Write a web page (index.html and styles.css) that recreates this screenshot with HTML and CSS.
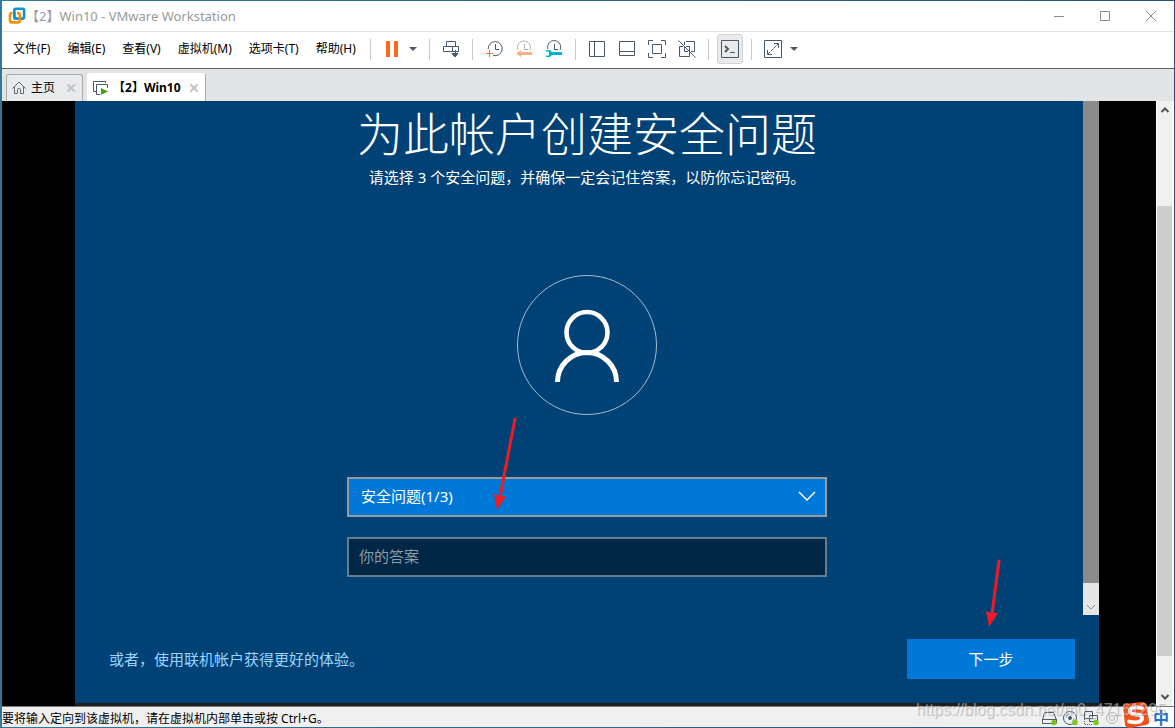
FILE: index.html
```html
<!DOCTYPE html>
<html lang="zh-CN">
<head>
<meta charset="utf-8">
<title>【2】Win10 - VMware Workstation</title>
<link rel="stylesheet" href="styles.css">
</head>
<body>
<div class="window">
  <header class="titlebar">
    <svg class="app-logo" width="18" height="18" viewBox="0 0 18 18" fill="none" stroke-width="2.6">
      <rect x="6.3" y="1.8" width="9.8" height="9.8" rx="1.5" stroke="#0d93cf"/>
      <path d="M4.5 6H3.6Q2 6 2 7.600V13.800Q2 15.400 3.600 15.400H10.200Q11.800 15.400 11.800 13.800V7.600Q11.800 6 10.200 6H9" stroke="#f0900a"/>
      <path d="M6.300 5V10.100Q6.300 11.600 7.800 11.600H9" stroke="#0d93cf"/>
    </svg>
    <h1 class="window-title">【2】Win10 - VMware Workstation</h1>
    <div class="window-controls">
      <button class="window-button" aria-label="最小化"><svg width="12" height="12" viewBox="0 0 12 12"><path d="M1 6.500H11"/></svg></button>
      <button class="window-button" aria-label="最大化"><svg width="12" height="12" viewBox="0 0 12 12"><path d="M1.500 1.500H10.500V10.500H1.500Z"/></svg></button>
      <button class="window-button" aria-label="关闭"><svg width="12" height="12" viewBox="0 0 12 12"><path d="M1 1L11 11M11 1L1 11"/></svg></button>
    </div>
  </header>

  <div class="menubar">
    <nav class="menu">
      <button class="menu-item">文件(F)</button>
      <button class="menu-item">编辑(E)</button>
      <button class="menu-item">查看(V)</button>
      <button class="menu-item">虚拟机(M)</button>
      <button class="menu-item">选项卡(T)</button>
      <button class="menu-item">帮助(H)</button>
    </nav>
    <div class="toolbar">
      <span class="separator"></span>
      <button class="tool" aria-label="挂起"><svg width="20" height="20" viewBox="0 0 20 20"><path d="M4 2H8V18H4ZM12 2H16V18H12Z" fill="#ff6a1f" stroke="none"/></svg></button>
      <button class="caret" aria-label="电源选项"><svg width="8" height="4" viewBox="0 0 8 4"><path d="M0 0H8L4 4Z"/></svg></button>
      <span class="separator separator-after-caret"></span>
      <button class="tool" aria-label="发送 Ctrl+Alt+Del"><svg width="20" height="20" viewBox="0 0 20 20"><path d="M5.500 2.500H14.500V7.500H5.500ZM2.500 7.500H17.500V12.500H2.500ZM11.500 7.500V12.500"/><path d="M11 14.500H17L14 18Z" fill="#47596a"/><path d="M14.500 11V16"/></svg></button>
      <span class="separator"></span>
      <button class="tool" aria-label="拍摄快照"><svg width="20" height="20" viewBox="0 0 20 20"><path d="M4.200 10A7 7 0 1 1 9 16.300M11.500 5V10.500H15"/><path d="M5.500 11V18M2 14.500H9" stroke="#ff6a1f"/></svg></button>
      <button class="tool" aria-label="恢复快照"><svg width="20" height="20" viewBox="0 0 20 20"><path d="M4 11A6.500 6.500 0 1 1 16 11M10.500 5V10.500H14" stroke="#aeb4ba"/><path d="M2 14.500L7 11V13H18V16H7V18Z" fill="#ffae87" stroke="none"/></svg></button>
      <button class="tool" aria-label="管理快照"><svg width="20" height="20" viewBox="0 0 20 20"><path d="M4 10A6.500 6.500 0 1 1 16 11M10.500 5V10.500H14"/><path d="M2 11H6L8 13H18V16H8L6 18H2V16.500H5V12.500H2Z" fill="#00b3d6" stroke="none"/></svg></button>
      <span class="separator"></span>
      <button class="tool" aria-label="显示库"><svg width="20" height="20" viewBox="0 0 20 20"><path d="M2.500 2.500H17.500V17.500H2.500ZM7.500 2.500V17.500"/></svg></button>
      <button class="tool" aria-label="显示缩略图栏"><svg width="20" height="20" viewBox="0 0 20 20"><path d="M2.500 2.500H17.500V16.500H2.500ZM2.500 12.500H17.500"/></svg></button>
      <button class="tool" aria-label="全屏"><svg width="20" height="20" viewBox="0 0 20 20"><path d="M1.500 6V1.500H6M14 1.500H18.500V6M18.500 14V18.500H14M6 18.500H1.500V14M5.500 5.500H14.500V14.500H5.500Z"/></svg></button>
      <button class="tool" aria-label="Unity 模式"><svg width="20" height="20" viewBox="0 0 20 20"><path d="M9 2.500H17.500V12.500H14M7.500 6V2.500M12.500 11V17.500H2.500V7.500H6M9 7.500H12.500V11M7.500 8V12.500H11M1.500 1.500L18.500 18.500"/></svg></button>
      <span class="separator"></span>
      <button class="tool tool-active" aria-label="控制台视图"><svg width="20" height="20" viewBox="0 0 20 20"><path d="M1.500 1.500H18.500V18.500H1.500ZM10 13.500H15"/><path d="M5 7L8 10L5 13" stroke-width="2"/></svg></button>
      <span class="separator"></span>
      <button class="tool" aria-label="自由拉伸"><svg width="20" height="20" viewBox="0 0 20 20"><path d="M1.500 1.500H18.500V18.500H1.500ZM11 4.500H15.500V9M4.500 11V15.500H9"/><path d="M5 15L15 5" stroke-dasharray="3 1"/></svg></button>
      <button class="caret" aria-label="拉伸选项"><svg width="8" height="4" viewBox="0 0 8 4"><path d="M0 0H8L4 4Z"/></svg></button>
    </div>
  </div>

  <div class="tabs">
    <div class="tab">
      <svg width="14" height="14" viewBox="0 0 14 14" fill="none" stroke="#5d6b78"><path d="M.5 7.500L7 1L13.500 7.500M2.500 6V12.500H5.500V8.500Q5.500 7.500 7 7.500T8.500 8.500V12.500H11.500V6"/></svg>
      <a class="tab-label" href="#home">主页</a>
      <button class="tab-close" aria-label="关闭主页"><svg width="8" height="8" viewBox="0 0 8 8"><path d="M0 0L8 8M8 0L0 8"/></svg></button>
    </div>
    <div class="tab tab-current">
      <svg width="16" height="16" viewBox="0 0 16 16" fill="none" stroke="#47596a"><path d="M3 11.500H.5V1.500H12.500V3M7 14.500H3.500V4.500H14.500V8"/><path d="M8 8L15 11.500L8 15Z" fill="#45a012" stroke="none"/></svg>
      <a class="tab-label" href="#vm">【2】Win10</a>
      <button class="tab-close" aria-label="关闭 Win10"><svg width="8" height="8" viewBox="0 0 8 8"><path d="M0 0L8 8M8 0L0 8"/></svg></button>
    </div>
  </div>

  <div class="console">
    <main class="guest">
      <section class="page">
        <h2 class="heading">为此帐户创建安全问题</h2>
        <p class="subheading">请选择 3 个安全问题，并确保一定会记住答案，以防你忘记密码。</p>
        <svg class="avatar" width="140" height="140" viewBox="0 0 140 140" fill="none" stroke="#fff">
          <circle cx="70" cy="70" r="69.500" stroke="#a3bccf"/>
          <circle cx="70" cy="57.500" r="20.500" stroke-width="4.600"/>
          <path d="M40.500 107A29.500 29.500 0 0 1 99.500 107" stroke-width="5"/>
        </svg>
        <form class="form">
          <div class="select-wrap">
            <select class="question" aria-label="安全问题"><option>安全问题(1/3)</option></select>
            <svg class="chevron" width="18" height="10" viewBox="0 0 18 10"><path d="M1 1L9 9L17 1"/></svg>
          </div>
          <input class="answer" type="text" placeholder="你的答案" aria-label="你的答案">
          <svg class="arrow arrow-form" width="24" height="94" viewBox="0 0 24 94"><path class="shaft" d="M21 2L6 80"/><path class="head" d="M3 93L0 77L6 79L12 79Z"/></svg>
        </form>
      </section>
      <div class="guest-scroll">
        <svg width="10" height="6" viewBox="0 0 10 6"><path d="M1 1L5 5L9 1"/></svg>
      </div>
      <footer class="guest-footer">
        <a class="online-link" href="#online">或者，使用联机帐户获得更好的体验。</a>
        <div class="next-wrap">
          <button class="next">下一步</button>
          <svg class="arrow arrow-next" width="16" height="70" viewBox="0 0 16 70"><path class="shaft" d="M13 3L6 56"/><path class="head" d="M3 69L0 53L6 55L12 55Z"/></svg>
        </div>
      </footer>
    </main>
    <div class="scrollbar">
      <svg width="10" height="8" viewBox="0 0 10 8"><path d="M1.500 6L5 2.500L8.500 6"/></svg>
      <div class="thumb"></div>
      <svg width="10" height="8" viewBox="0 0 10 8"><path d="M1.500 2L5 5.500L8.500 2"/></svg>
    </div>
  </div>

  <div class="statusbar">
    <span class="status-text">要将输入定向到该虚拟机，请在虚拟机内部单击或按 Ctrl+G。</span>
    <div class="devices">
      <svg width="17" height="16" viewBox="0 0 17 16"><path d="M3.500 2.500H12.500L15.500 10V13.500H1.500V10ZM1.500 9.500H15.500"/><circle class="led" cx="13" cy="12.500" r="2.700"/></svg>
      <svg width="17" height="16" viewBox="0 0 17 16"><circle cx="8" cy="8" r="6.500"/><circle cx="8" cy="8" r="1.500" fill="#47596a"/><path d="M4 8A4 4 0 0 1 8 4M12 8A4 4 0 0 1 10 11.500" stroke="#9aa4ad"/><circle class="led" cx="13" cy="12.500" r="2.700"/></svg>
      <svg width="17" height="16" viewBox="0 0 17 16"><path d="M1.500 1.500H9.500V8.500H1.500ZM6.500 5.500H14.500V11.500H6.500Z"/><path d="M1.500 9V14.500H10" stroke-dasharray="1 1"/><circle class="led" cx="13" cy="12.500" r="2.700"/></svg>
      <svg width="17" height="16" viewBox="0 0 17 16"><g stroke="#b4b9be"><circle cx="8" cy="8" r="5.500"/><circle cx="8" cy="8" r="2.500"/></g></svg>
    </div>
    <div class="ime">中</div>
    <svg class="ime-logo" width="28" height="26" viewBox="0 0 28 26"><path d="M1 6Q0 3 3 2L20 0Q23 0 24 3L27 18Q28 22 24 23L8 26Q4 26 3 23Z" fill="#f4511e"/><path d="M20 6Q8 4 8 9Q8 12 14 12.500Q21 13 20 17Q18 22 7 19.500" fill="none" stroke="#fff" stroke-width="3.800" stroke-linecap="round"/></svg>
    <div class="watermark">https://blog.csdn.net/m0_47161295</div>
  </div>
</div>
</body>
</html>
```

FILE: styles.css
```css
* { box-sizing: border-box; }

body {
  margin: 0;
  font: 12px/16px "Noto Sans", "Noto Sans CJK SC", sans-serif;
  color: #000;
}

button, input, select { font: inherit; color: inherit; }
button { border: 0; padding: 0; background: none; }
a { color: inherit; text-decoration: none; }
svg { display: block; flex: none; }

.window {
  display: flex;
  flex-direction: column;
  min-height: 100vh;
  padding: 1px 1px 1px 2px;
  background: linear-gradient(90deg, #2f789c, #2a4d86);
}

.titlebar {
  display: flex;
  align-items: center;
  height: 31px;
  padding-left: 6px;
  background: #fff;
  border-bottom: 1px solid #dfe0e1;
}
.window-title {
  flex: 1;
  margin: 0;
  font-size: 13px;
  font-weight: 400;
  color: #999;
}
.window-controls { display: flex; }
.window-button { display: grid; place-items: center; width: 46px; height: 30px; }
.window-button svg { fill: none; stroke: #8c8c8c; }

.menubar {
  display: flex;
  align-items: center;
  height: 37px;
  padding-bottom: 2px;
  background: #fff;
  border-bottom: 1px solid #626467;
}
.menu { display: flex; gap: 1px; padding-left: 3px; }
.menu-item { padding: 0 8px; white-space: nowrap; }
.toolbar { display: flex; align-items: center; }
.separator { width: 1px; height: 21px; margin: 0 6px; background: #c9cbcd; }
.separator-after-caret { margin-left: 10px; }
.tool { display: grid; place-items: center; width: 30px; height: 30px; }
.tool svg { fill: none; stroke: #47596a; }
.tool-active {
  width: 26px;
  margin: 0 2px;
  background: #e8eaec;
  border: 1px solid #d0d2d4;
  border-radius: 3px;
}
.caret { display: grid; place-items: center; width: 12px; height: 30px; }
.caret svg { fill: #47596a; }

.tabs {
  display: flex;
  align-items: flex-end;
  gap: 4px;
  height: 32px;
  padding-left: 4px;
  background: #e3e4e6;
}
.tab {
  display: flex;
  align-items: center;
  height: 27px;
  padding: 0 7px 0 5px;
  background: #e9eaec;
  border: 1px solid #a9abad;
  border-bottom: 0;
  border-radius: 3px 3px 0 0;
}
.tab-current { height: 28px; background: #fff; border-color: #fff #a9abad #fff #fff; }
.tab-label { margin: 0 12px 0 5px; white-space: nowrap; }
.tab-current .tab-label { margin: 0 9px 0 4px; font-weight: 700; }
.tab-close svg { fill: none; stroke: #c2c4c6; stroke-width: 2; }

.console {
  display: flex;
  flex: 1;
  padding-left: 73px;
  background: #000;
}
.guest {
  flex: 1;
  display: grid;
  grid-template-columns: 1fr 16px;
  grid-template-rows: 1fr auto;
  margin-right: 57px;
  background: #004275;
  border-bottom: 3px solid #1f1f1f;
  color: #fff;
  font-size: 15px;
  line-height: 20px;
}
.page {
  display: flex;
  flex-direction: column;
  align-items: center;
  padding: 4px 0 38px 16px;
}
.heading {
  margin: 0;
  font: 300 46px/52px "Noto Sans CJK SC Light", "Noto Sans CJK SC", sans-serif;
}
.subheading { margin: 10px 0 0; }
.avatar { margin: 88px 0 62px; }
.form {
  position: relative;
  display: grid;
  gap: 20px;
  width: 480px;
  max-width: 100%;
}
.select-wrap { position: relative; }
.question, .answer {
  display: block;
  width: 100%;
  height: 40px;
  border-radius: 0;
  outline: 0;
}
.question {
  appearance: none;
  padding: 0 12px 2px;
  background: #0078d7;
  border: 2px solid #999;
}
.answer { padding: 0 10px 2px; background: #002745; border: 2px solid #667d8f; }
.answer::placeholder { color: #8c9caa; opacity: 1; }
.chevron {
  position: absolute;
  top: 14px;
  right: 11px;
  fill: none;
  stroke: #fff;
  stroke-width: 1.5;
  pointer-events: none;
}
.arrow { position: absolute; pointer-events: none; }
.arrow .shaft { fill: none; stroke: #ed1c24; stroke-width: 3; stroke-linecap: round; }
.arrow .head { fill: #ed1c24; }
.arrow-form { left: 147px; top: -60px; }
.arrow-next { left: 79px; top: -81px; }

.guest-scroll {
  display: flex;
  flex-direction: column;
  justify-content: flex-end;
  align-items: center;
  padding-bottom: 5px;
  background: linear-gradient(#e6e6e6, #e6e6e6) bottom / 100% 32px no-repeat #8b8b8b;
}
.guest-scroll svg { fill: none; stroke: #8a8a8a; }
.guest-footer {
  grid-column: 1 / -1;
  display: flex;
  align-items: center;
  justify-content: space-between;
  padding: 24px 24px 24px 34px;
}
.online-link { color: #9bd4ff; }
.next-wrap { position: relative; }
.next { width: 168px; height: 40px; background: #0078d7; }

.scrollbar {
  display: flex;
  flex-direction: column;
  align-items: center;
  width: 18px;
  padding: 5px 0;
  background: #f0f0f0;
  border: solid #fff;
  border-width: 0 2px 0 1px;
}
.scrollbar svg { fill: none; stroke: #505050; stroke-width: 2; }
.thumb { flex: 1; width: 100%; margin: 92px 0 37px; background: #cdcdcd; }

.statusbar {
  position: relative;
  display: flex;
  align-items: center;
  height: 21px;
  background: #f0f0f0;
  border-top: 1px solid #77797b;
}
.status-text { flex: 1; padding-top: 4px; white-space: nowrap; }
.devices { display: flex; gap: 4px; margin-right: 1px; padding-top: 2px; }
.devices svg { fill: none; stroke: #47596a; }
.devices .led { fill: #7ac41c; stroke: none; }
.ime {
  width: 52px;
  padding-left: 31px;
  background: #fff;
  color: #1b72c8;
  font: 700 16px/20px "Noto Sans CJK SC", sans-serif;
}
.ime-logo { position: absolute; right: 24px; bottom: -1px; }
.watermark {
  position: absolute;
  right: 8px;
  bottom: 7px;
  color: rgba(255, 255, 255, .45);
  font: 16px/20px "Liberation Sans", Arial, sans-serif;
  text-shadow: 1px 1px 1px rgba(90, 90, 90, .4);
}
```
